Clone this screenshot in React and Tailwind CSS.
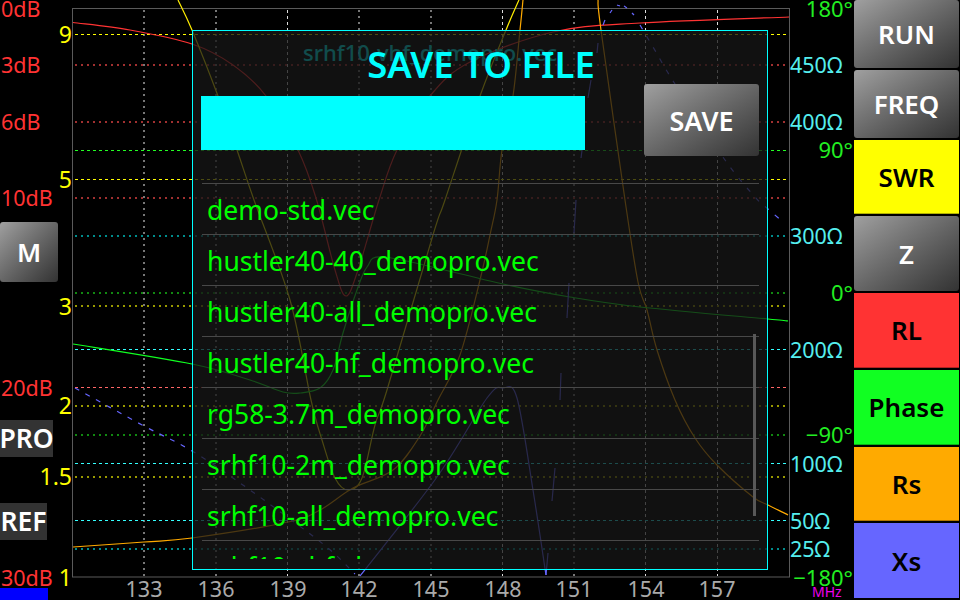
import React from "react";

const font = { fontFamily: '"Noto Sans", sans-serif' };

const spline = (p) => {
  let d = `M${p[0][0]} ${p[0][1]}`;
  for (let i = 0; i < p.length - 1; i++) {
    const a = p[Math.max(i - 1, 0)], b = p[i], c = p[i + 1], e = p[Math.min(i + 2, p.length - 1)];
    d += ` C${(b[0] + (c[0] - a[0]) / 6).toFixed(1)} ${(b[1] + (c[1] - a[1]) / 6).toFixed(1)} ${(c[0] - (e[0] - b[0]) / 6).toFixed(1)} ${(c[1] - (e[1] - b[1]) / 6).toFixed(1)} ${c[0]} ${c[1]}`;
  }
  return d;
};

const hLines = [
  [34.5, "#ffff00", "3 3", 1],
  [65, "#a03030", "2 4", 2],
  [122, "#a03030", "2 4", 2],
  [150.5, "#22ff22", "3 3", 1],
  [179.5, "#ffff00", "3 3", 1],
  [198, "#a03030", "2 4", 2],
  [236, "#008c8c", "2 4", 2],
  [293, "#118811", "2 4", 2],
  [306, "#999900", "2 4", 2],
  [349.5, "#33ffff", "3 3", 1],
  [387.5, "#ff6666", "3 3", 1],
  [406, "#999900", "2 4", 2],
  [435, "#118811", "2 4", 2],
  [463.5, "#33ffff", "3 3", 1],
  [477, "#999900", "2 4", 2],
  [520.5, "#33ffff", "3 3", 1],
  [549, "#008c8c", "2 4", 2],
];

const vLines = [
  [144, "#777777", "2 4", 2],
  [216, "#777777", "2 4", 2],
  [287.5, "#dddddd", "3 3", 1],
  [359, "#777777", "2 4", 2],
  [431, "#777777", "2 4", 2],
  [502.5, "#dddddd", "3 3", 1],
  [574, "#777777", "2 4", 2],
  [645.5, "#dddddd", "3 3", 1],
  [717.5, "#dddddd", "3 3", 1],
];

const red = [[73, 22.5], [130, 30], [192, 44], [233, 65], [266, 96], [298, 150], [316, 198], [335, 270], [346, 296], [358, 270], [379, 200], [397, 150], [430, 96], [470, 62], [553, 32], [640, 23], [789, 17]];
const yellow = [[178, 0], [192, 30], [218, 96], [237, 150], [254, 200], [290, 300], [311, 400], [322, 440], [335, 478], [348, 490], [362, 478], [375, 425], [387, 390], [433, 235], [445, 200], [480, 96], [506, 30], [519, 0]];
const orangeA = [[73, 547], [144, 542], [192, 538], [288, 522], [320, 510], [353, 488], [393, 470], [420, 436], [438, 400], [460, 355], [480, 280], [490, 235], [497, 200], [502, 150], [513, 96], [520, 30], [523, 0]];
const orangeB = [[598, 0], [601, 30], [625, 200], [638, 282], [647, 310], [657, 350], [675, 400], [695, 438], [717, 465], [753, 497], [768, 505], [788, 515]];
const green = [[73, 344], [192, 364], [250, 380], [283, 392], [300, 393], [320, 388], [333, 370], [343, 333], [357, 290], [367, 267], [383, 257], [453, 272], [503, 284], [570, 297], [640, 307], [768, 319], [788, 321]];
const blueSolid = [[360, 576], [437, 477], [487, 398], [503, 388], [517, 398], [533, 490], [546, 575]];
const blueDashLeft = [[75, 388], [144, 426], [192, 451], [250, 490], [323, 544], [355, 574]];
const blueDashRight = [[640, 25], [653, 47], [675, 84], [725, 160], [755, 197], [768, 209], [783, 222]];
const blueBits = [
  [[546, 575], [548, 553]], [[552, 501], [555, 468]], [[560, 400], [561, 373]], [[567, 318], [569, 283]],
  [[574, 233], [576, 200]], [[581, 158], [583, 143]], [[588, 98], [591, 80]], [[597, 53], [598, 43]],
  [[603, 25], [605, 20]], [[610, 13], [612, 10]], [[617, 5], [620, 6]], [[624, 6], [627, 8]], [[632, 13], [634, 15]],
];

const dbLabels = [["0dB", 9], ["3dB", 65], ["6dB", 122], ["10dB", 198], ["20dB", 388], ["30dB", 578]];
const swrLabels = [["9", 34], ["5", 179], ["3", 306], ["2", 405], ["1.5", 476], ["1", 577]];
const freqLabels = [["133", 144], ["136", 216], ["139", 288], ["142", 359], ["145", 431], ["148", 503], ["151", 574], ["154", 646], ["157", 717]];
const ohmLabels = [["450Ω", 65], ["400Ω", 122], ["300Ω", 236], ["200Ω", 350], ["100Ω", 464], ["50Ω", 521], ["25Ω", 549]];
const degLabels = [["180°", 8], ["90°", 149], ["0°", 292], ["−90°", 434], ["−180°", 577]];

const files = [
  "demo-std.vec",
  "hustler40-40_demopro.vec",
  "hustler40-all_demopro.vec",
  "hustler40-hf_demopro.vec",
  "rg58-3.7m_demopro.vec",
  "srhf10-2m_demopro.vec",
  "srhf10-all_demopro.vec",
  "srhf10-vhf_demopro.vec",
];

function Chart() {
  return (
    <svg viewBox="72 0 718 600" className="absolute inset-0 w-[718px] h-[600px]" fill="none">
      <rect x="72.5" y="8.5" width="717" height="568.5" stroke="#5a5a5a" />
      {vLines.map(([x, c, d, w]) => (
        <line key={x} x1={x} x2={x} y1="10" y2="576" stroke={c} strokeDasharray={d} strokeWidth={w} />
      ))}
      {hLines.map(([y, c, d, w]) => (
        <line key={y} x1="75" x2="787" y1={y} y2={y} stroke={c} strokeDasharray={d} strokeWidth={w} />
      ))}
      <path d={spline(red)} stroke="#ff3333" strokeWidth="1.2" />
      <path d={spline(yellow)} stroke="#ffee00" strokeWidth="1.2" />
      <path d={spline(orangeA)} stroke="#ffaa00" strokeWidth="1.2" />
      <path d={spline(orangeB)} stroke="#ffaa00" strokeWidth="1.2" />
      <path d={spline(green)} stroke="#11ff22" strokeWidth="1.2" />
      <path d={spline(blueSolid)} stroke="#6666ff" strokeWidth="1.2" />
      <path d={spline(blueDashLeft)} stroke="#6666ff" strokeWidth="1.2" strokeDasharray="5 7" />
      <path d={spline(blueDashRight)} stroke="#6666ff" strokeWidth="1.2" strokeDasharray="5 8" />
      {blueBits.map((b, i) => (
        <path key={i} d={spline(b)} stroke="#6666ff" strokeWidth="1.2" />
      ))}
    </svg>
  );
}

function SaveDialog() {
  return (
    <div className="absolute left-[120px] top-[30px] w-[576px] h-[540px] border border-[#00ffff] bg-[#161616]/[.77] flex flex-col px-[8px]">
      <div className="h-[53px] pt-[14px] pl-[2px] flex items-center justify-center text-[36.5px] leading-[53px] font-semibold text-[#00ffff]">SAVE TO FILE</div>
      <div className="flex items-start justify-between h-[72px]">
        <div className="mt-[12px] w-[384px] h-[54px] bg-[#00ffff]" />
        <button className="w-[115px] h-[72px] pt-[2px] rounded-[3px] bg-gradient-to-br from-[#a0a0a0] to-[#333333] text-white text-[27px] font-semibold">SAVE</button>
      </div>
      <div className="relative mt-[27px] ml-[1px] h-[376px] overflow-hidden">
        {files.map((f) => (
          <div key={f} className="h-[51px] border-t border-[#484848] pl-[5px] text-[26.5px] leading-[53px] text-[#00ff00]">{f}</div>
        ))}
        <div className="absolute right-[3px] top-[151px] w-[3px] h-[182px] bg-[#585858]" />
      </div>
    </div>
  );
}

function SideButton({ label, cls }) {
  return (
    <div className={`flex items-center justify-center pt-[2px] text-[26px] font-semibold ${cls}`}>{label}</div>
  );
}

const grayBtn = "rounded-[3px] bg-gradient-to-br from-[#a0a0a0] to-[#333333] text-white";

export default function App() {
  return (
    <div className="w-[960px] h-[600px] bg-black flex overflow-hidden" style={font}>
      {/* left rail */}
      <div className="relative w-[72px] h-full shrink-0">
        {dbLabels.map(([t, y]) => (
          <span key={t} className="absolute left-[1px] -translate-y-1/2 text-[21.5px] leading-none text-[#ff3333]" style={{ top: y }}>{t}</span>
        ))}
        {swrLabels.map(([t, y]) => (
          <span key={t} className="absolute right-[0px] -translate-y-1/2 text-[23px] leading-none text-[#ffff00]" style={{ top: y }}>{t}</span>
        ))}
        <div className={`absolute left-0 top-[222px] w-[58px] h-[60px] ${grayBtn} flex items-center justify-center text-[26px] font-semibold`}>M</div>
        <div className="absolute left-0 top-[420px] w-[53px] h-[37px] bg-[#333333] flex items-center justify-center text-white text-[26.5px] font-semibold">PRO</div>
        <div className="absolute left-0 top-[503px] w-[47px] h-[37px] bg-[#333333] flex items-center justify-center text-white text-[26.5px] font-semibold">REF</div>
        <div className="absolute left-0 bottom-0 w-[48px] h-[12px] bg-[#0000ff]" />
      </div>

      {/* chart */}
      <div className="relative w-[718px] h-full shrink-0">
        <Chart />
        <span className="absolute left-[231px] top-[38px] text-[22px] leading-[28px] font-medium text-[#00ffff]">srhf10-vhf_demopro.vec</span>
        {freqLabels.map(([t, x]) => (
          <span key={t} className="absolute bottom-0 -translate-x-1/2 text-[21.5px] leading-[22px] text-[#aaaaaa]" style={{ left: x - 72 }}>{t}</span>
        ))}
        <SaveDialog />
      </div>

      {/* right axis */}
      <div className="relative flex-1 h-full">
        {ohmLabels.map(([t, y]) => (
          <span key={t} className="absolute left-[0px] -translate-y-1/2 text-[21.5px] leading-none text-[#55eeee]" style={{ top: y }}>{t}</span>
        ))}
        {degLabels.map(([t, y]) => (
          <span key={t} className="absolute right-[1px] -translate-y-1/2 text-[22px] leading-none text-[#22ee22]" style={{ top: y }}>{t}</span>
        ))}
        <span className="absolute left-[22px] bottom-[1px] text-[14px] leading-none text-[#ee00ee]">MHz</span>
      </div>

      {/* buttons */}
      <div className="w-[106px] h-full shrink-0 flex flex-col pb-[2px] pr-[1px]">
        <SideButton label="RUN" cls={`h-[68px] mb-[2px] ${grayBtn}`} />
        <SideButton label="FREQ" cls={`h-[68px] mb-[2px] ${grayBtn}`} />
        <SideButton label="SWR" cls="h-[75px] mb-[2px] bg-[#ffff00] text-black border-b border-black/30" />
        <SideButton label="Z" cls={`h-[75px] mb-[2px] ${grayBtn}`} />
        <SideButton label="RL" cls="h-[75px] mb-[2px] bg-[#ff3333] text-black border-b border-black/30" />
        <SideButton label="Phase" cls="h-[75px] mb-[2px] bg-[#11ff22] text-black border-b border-black/30" />
        <SideButton label="Rs" cls="h-[75px] mb-[2px] bg-[#ffaa00] text-black border-b border-black/30" />
        <SideButton label="Xs" cls="h-[75px] bg-[#6666ff] text-black" />
      </div>
    </div>
  );
}
